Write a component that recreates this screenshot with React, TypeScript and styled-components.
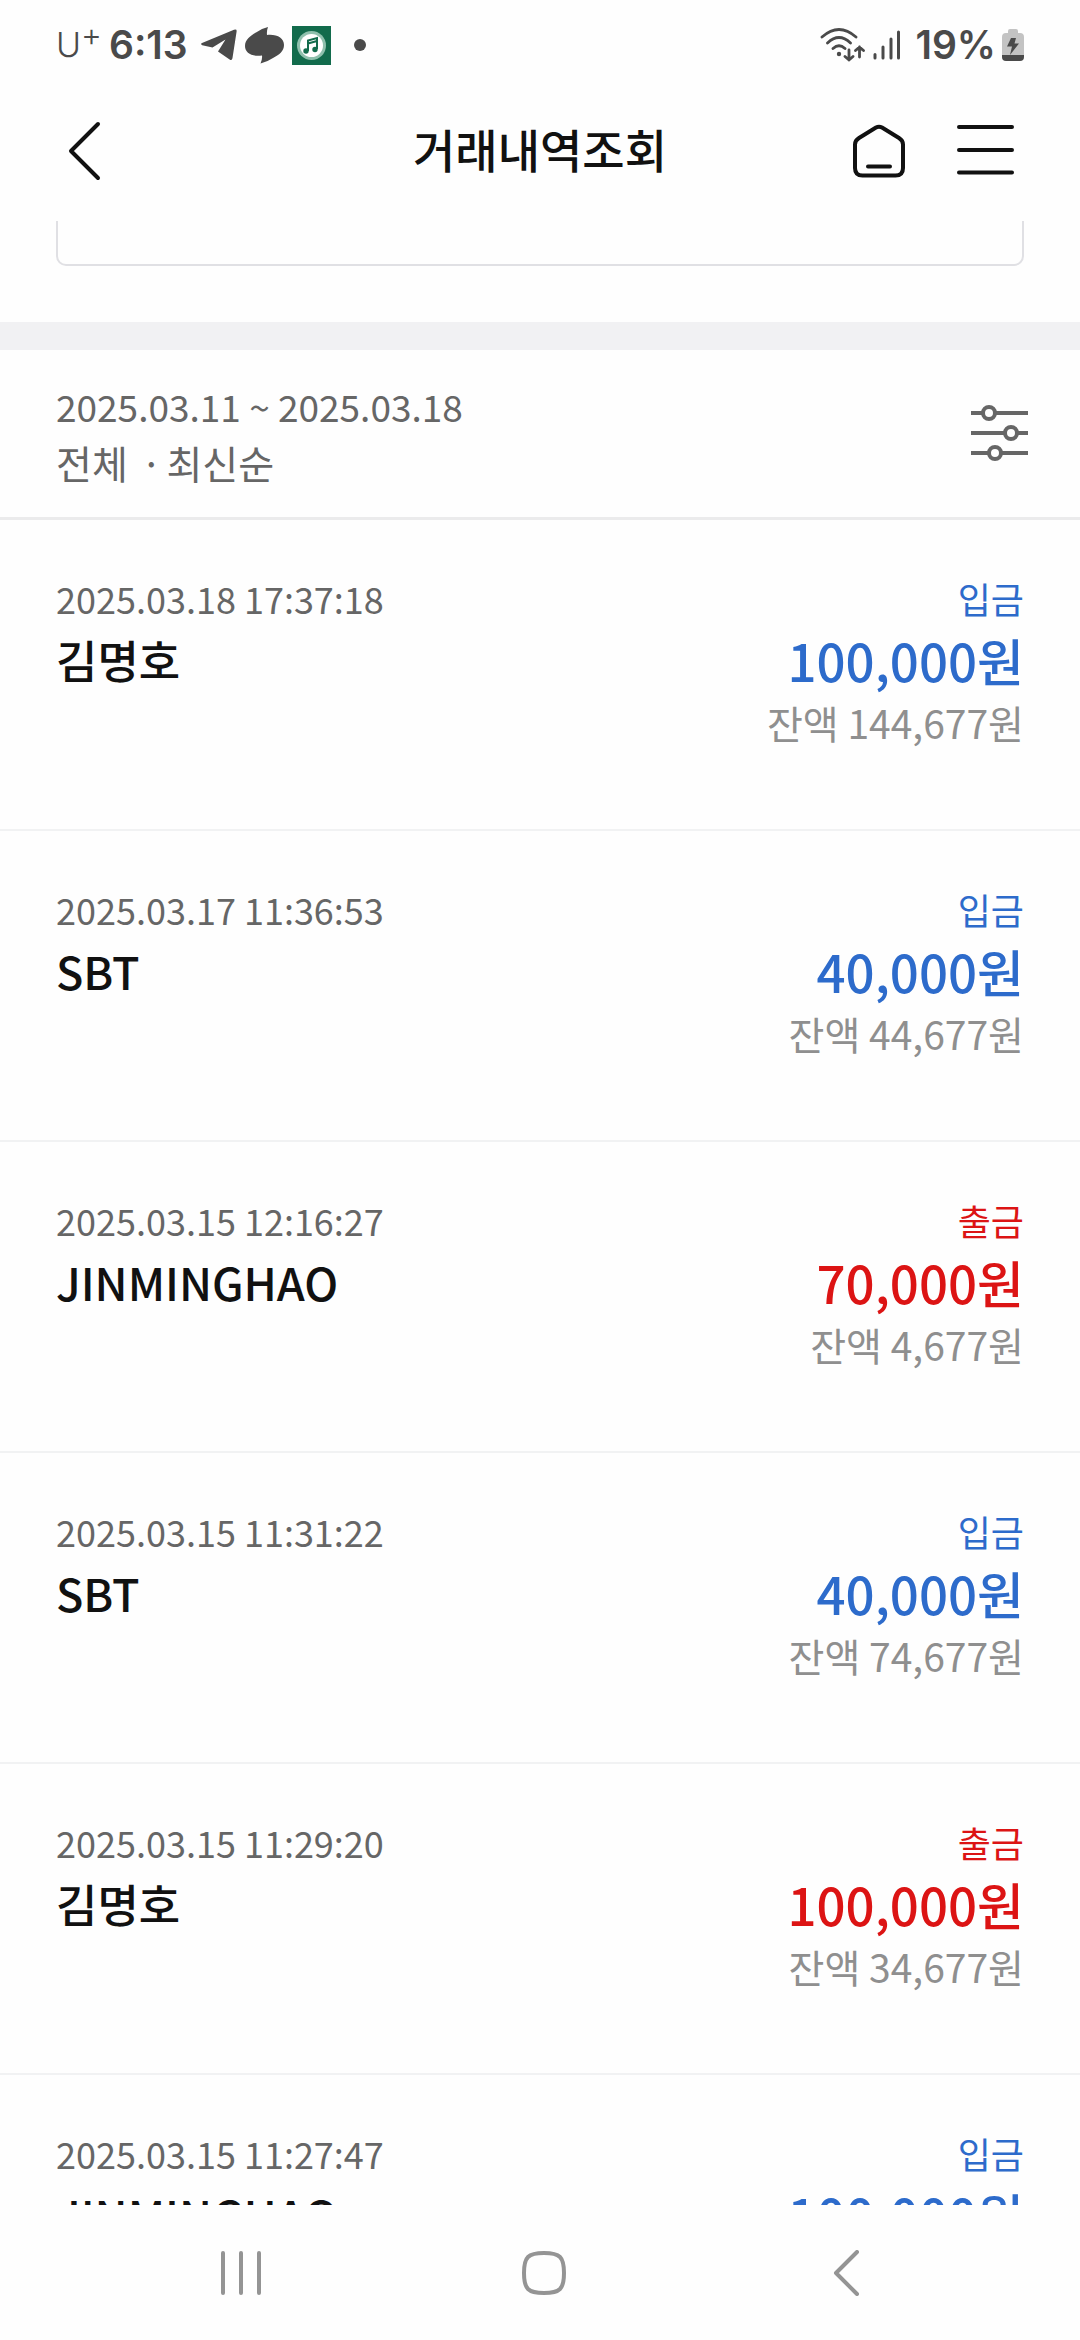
import React from "react";
import styled, { createGlobalStyle } from "styled-components";

const GlobalStyle = createGlobalStyle`
  * { box-sizing: border-box; }
  body {
    margin: 0;
    background: #fefefe;
    color: #111;
    font-family: "Noto Sans CJK KR", "Noto Sans", sans-serif;
  }
  h1, p, ul { margin: 0; padding: 0; }
  ul { list-style: none; }
  button {
    display: flex;
    padding: 0;
    border: 0;
    background: none;
    color: inherit;
    font: inherit;
    cursor: pointer;
  }
  svg { display: block; flex: none; }
`;

const Screen = styled.div`
  display: flex;
  flex-direction: column;
  height: 100vh;
  overflow: hidden;
`;

const StatusBar = styled.div`
  display: flex;
  justify-content: space-between;
  align-items: center;
  flex: none;
  height: 90px;
  padding: 0 56px;
  color: #4a4a4a;
  font-family: Inter, sans-serif;
  font-size: 39px;
  font-weight: 600;
  line-height: 48px;
`;

const StatusGroup = styled.div<{ $gap: number }>`
  display: flex;
  align-items: center;
  gap: ${(p) => p.$gap}px;
`;

const Network = styled.div`
  display: flex;
  align-items: center;
  gap: 8px;
  margin-right: 8px;
`;

const Notifications = styled.div`
  display: flex;
  align-items: center;
  gap: 8px;
  margin-left: 6px;
`;

const Carrier = styled.span`
  display: flex;
  font-size: 34px;
  font-weight: 300;
`;

const CarrierPlus = styled.span`
  font-size: 32px;
  line-height: 28px;
`;

const AppBar = styled.header`
  display: grid;
  grid-template-columns: 1fr auto 1fr;
  align-items: center;
  flex: none;
  height: 131px;
  padding: 0 66px 10px;
`;

const Title = styled.h1`
  padding-bottom: 6px;
  font-size: 46px;
  font-weight: 500;
  line-height: 68px;
`;

const AppBarActions = styled.div`
  display: flex;
  justify-content: flex-end;
  gap: 51px;
`;

const Content = styled.main`
  flex: 1;
  min-height: 0;
  overflow: hidden;
`;

const AccountCard = styled.div`
  height: 45px;
  margin: 0 56px 56px;
  border: 2px solid #e0e0e4;
  border-top: 0;
  border-radius: 0 0 10px 10px;
`;

const Divider = styled.div`
  height: 28px;
  background: #f1f1f3;
`;

const FilterBar = styled.section`
  display: flex;
  justify-content: space-between;
  align-items: center;
  height: 170px;
  padding: 0 52px 0 56px;
  border-bottom: 3px solid #ebebec;
  color: #666;
  line-height: 56px;
`;

const Period = styled.p`
  font-size: 37px;
`;

const Condition = styled.p`
  font-size: 39px;
`;

const Separator = styled.span`
  margin: 0 4px;
`;

const Row = styled.li`
  display: flex;
  justify-content: space-between;
  height: 311px;
  padding: 47px 56px 0;
  border-bottom: 2px solid #f1f2f3;
`;

const Column = styled.div<{ $end?: boolean }>`
  display: flex;
  flex-direction: column;
  align-items: ${(p) => (p.$end ? "flex-end" : "flex-start")};
`;

const DateText = styled.time`
  color: #666;
  font-size: 36px;
  line-height: 62px;
`;

const Name = styled.p`
  font-size: 45px;
  font-weight: 500;
  line-height: 62px;
`;

const Kind = styled.p<{ $color: string }>`
  color: ${(p) => p.$color};
  font-size: 36px;
  line-height: 62px;
`;

const Amount = styled.p<{ $color: string }>`
  color: ${(p) => p.$color};
  font-size: 51px;
  font-weight: 500;
  line-height: 62px;
`;

const Balance = styled.p`
  color: #8f8f8f;
  font-size: 39px;
  line-height: 62px;
`;

const NavBar = styled.nav`
  display: flex;
  justify-content: center;
  align-items: center;
  gap: 257px;
  flex: none;
  height: 135px;
  padding-left: 8px;
`;

type Entry = { date: string; name: string; deposit: boolean; amount: string; balance?: string };

const entries: Entry[] = [
  { date: "2025.03.18 17:37:18", name: "김명호", deposit: true, amount: "100,000원", balance: "144,677원" },
  { date: "2025.03.17 11:36:53", name: "SBT", deposit: true, amount: "40,000원", balance: "44,677원" },
  { date: "2025.03.15 12:16:27", name: "JINMINGHAO", deposit: false, amount: "70,000원", balance: "4,677원" },
  { date: "2025.03.15 11:31:22", name: "SBT", deposit: true, amount: "40,000원", balance: "74,677원" },
  { date: "2025.03.15 11:29:20", name: "김명호", deposit: false, amount: "100,000원", balance: "34,677원" },
  { date: "2025.03.15 11:27:47", name: "JINMINGHAO", deposit: true, amount: "100,000원" },
];

const TelegramIcon = () => (
  <svg width="36" height="32" viewBox="0 0 36 32" fill="#4a4a4a">
    <path d="M1 14 33 .7Q36-.3 35.6 2.4L31.5 29Q31 32 28.6 30.4L17 22.6 24.5 10.6 11.5 18.6 1.2 16.2Q-1 15 1 14Z" />
  </svg>
);

const SwirlIcon = () => (
  <svg width="39" height="37" viewBox="0 0 39 37" fill="#4a4a4a">
    <path d="M23 0Q21.500 4 22 8C32 7 39 11 39 18C39 24 34 28 28 31Q22 35 15.500 36.500Q17.500 32 17 28.500C7 30 0 26 0 19C0 13 5 9 11 5.500Q17 1 23 0Z" />
  </svg>
);

const MusicIcon = () => (
  <svg width="39" height="39" viewBox="0 0 39 39">
    <path d="M0 0H39V39H0Z" fill="#126b4c" />
    <circle cx="19.500" cy="19.500" r="14.500" fill="#8fc0ad" />
    <circle cx="19.500" cy="19.500" r="11.500" fill="#fff" />
    <path d="M16 25V14.500L25 12V23M16 17.500 25 15" fill="none" stroke="#126b4c" strokeWidth="2" />
    <circle cx="14" cy="25" r="2.700" fill="#126b4c" />
    <circle cx="23" cy="23.500" r="2.700" fill="#126b4c" />
  </svg>
);

const DotIcon = () => (
  <svg width="34" height="14" viewBox="0 0 34 14">
    <circle cx="21" cy="7" r="6" fill="#4a4a4a" />
  </svg>
);

const WifiIcon = () => (
  <svg width="45" height="34" viewBox="0 0 45 34" fill="none" stroke="#4a4a4a" strokeWidth="2.800" strokeLinecap="round">
    <path d="M2 9Q19-6 36 9M7.500 15Q19 4 30.500 15M13 20.500Q19 15 25 20.500" />
    <circle cx="19" cy="26" r="2.200" fill="#4a4a4a" stroke="none" />
    <path d="M29 22V32M25 28.500 29 32 33 28.500M39.500 29V19M35.500 22.500 39.500 19 43.500 22.500" />
  </svg>
);

const SignalIcon = () => (
  <svg width="28" height="30" viewBox="0 0 28 30" stroke="#4a4a4a" strokeWidth="3" strokeLinecap="round">
    <path d="M2 24.500V28M10 17V28M18 9V28M25.500 2V28" />
  </svg>
);

const BatteryIcon = () => (
  <svg width="22" height="32" viewBox="0 0 22 32">
    <path d="M6 4V2Q6 0 8 0H14Q16 0 16 2V4H18Q22 4 22 8V26H0V8Q0 4 4 4Z" fill="#c3c3c3" />
    <path d="M0 26H22V28Q22 32 18 32H4Q0 32 0 28Z" fill="#4a4a4a" />
    <path d="M9 9H14L12.500 14.500H17L8 26 10 17.500H5Z" fill="#4a4a4a" />
  </svg>
);

const App = () => (
  <>
    <GlobalStyle />
    <Screen>
      <StatusBar>
        <StatusGroup $gap={7}>
          <Carrier>U<CarrierPlus>+</CarrierPlus></Carrier>
          <span>6:13</span>
          <Notifications>
            <TelegramIcon />
            <SwirlIcon />
            <MusicIcon />
            <DotIcon />
          </Notifications>
        </StatusGroup>
        <StatusGroup $gap={6}>
          <Network>
            <WifiIcon />
            <SignalIcon />
          </Network>
          <span>19%</span>
          <BatteryIcon />
        </StatusGroup>
      </StatusBar>

      <AppBar>
        <button type="button" aria-label="뒤로">
          <svg width="40" height="60" viewBox="0 0 40 60" fill="none" stroke="#111" strokeWidth="4" strokeLinecap="round" strokeLinejoin="round">
            <path d="M32 3 5 30 32 57" />
          </svg>
        </button>
        <Title>거래내역조회</Title>
        <AppBarActions>
          <button type="button" aria-label="홈">
            <svg width="54" height="54" viewBox="0 0 54 54" fill="none" stroke="#111" strokeWidth="4" strokeLinecap="round" strokeLinejoin="round">
              <path d="M24 3.500Q27 1.800 30 3.500L47 14Q51 16.500 51 20.500V44Q51 51.500 43.500 51.500H10.500Q3 51.500 3 44V20.500Q3 16.500 7 14Z" />
              <path d="M16 42.500H38" />
            </svg>
          </button>
          <button type="button" aria-label="메뉴">
            <svg width="57" height="54" viewBox="0 0 57 54" stroke="#111" strokeWidth="4" strokeLinecap="round">
              <path d="M2 3H55M2 26H55M2 48.500H55" />
            </svg>
          </button>
        </AppBarActions>
      </AppBar>

      <Content>
        <AccountCard />
        <Divider />
        <FilterBar>
          <div>
            <Period>2025.03.11 ~ 2025.03.18</Period>
            <Condition>전체 <Separator>·</Separator>최신순</Condition>
          </div>
          <button type="button" aria-label="조회 조건">
            <svg width="57" height="57" viewBox="0 0 57 57" fill="#fefefe" stroke="#666" strokeWidth="4">
              <path d="M0 8H57M0 28H57M0 48H57" />
              <circle cx="18" cy="8" r="6" />
              <circle cx="40" cy="28" r="6" />
              <circle cx="24" cy="48" r="6" />
            </svg>
          </button>
        </FilterBar>
        <ul>
          {entries.map((e) => {
            const color = e.deposit ? "#2d6bcb" : "#dc1414";
            return (
              <Row key={e.date}>
                <Column>
                  <DateText>{e.date}</DateText>
                  <Name>{e.name}</Name>
                </Column>
                <Column $end>
                  <Kind $color={color}>{e.deposit ? "입금" : "출금"}</Kind>
                  <Amount $color={color}>{e.amount}</Amount>
                  {e.balance && <Balance>잔액 {e.balance}</Balance>}
                </Column>
              </Row>
            );
          })}
        </ul>
      </Content>

      <NavBar>
        <button type="button" aria-label="최근 앱">
          <svg width="46" height="46" viewBox="0 0 46 46" stroke="#949494" strokeWidth="4" strokeLinecap="round">
            <path d="M5 3V43M23 3V43M41 3V43" />
          </svg>
        </button>
        <button type="button" aria-label="홈 화면">
          <svg width="46" height="46" viewBox="0 0 46 46" fill="none" stroke="#949494" strokeWidth="4">
            <path d="M23 3C39 3 43 7 43 23S39 43 23 43 3 39 3 23 7 3 23 3Z" />
          </svg>
        </button>
        <button type="button" aria-label="이전">
          <svg width="46" height="46" viewBox="0 0 46 46" fill="none" stroke="#949494" strokeWidth="4" strokeLinecap="round" strokeLinejoin="round">
            <path d="M33 2 12 23 33 44" />
          </svg>
        </button>
      </NavBar>
    </Screen>
  </>
);

export default App;
